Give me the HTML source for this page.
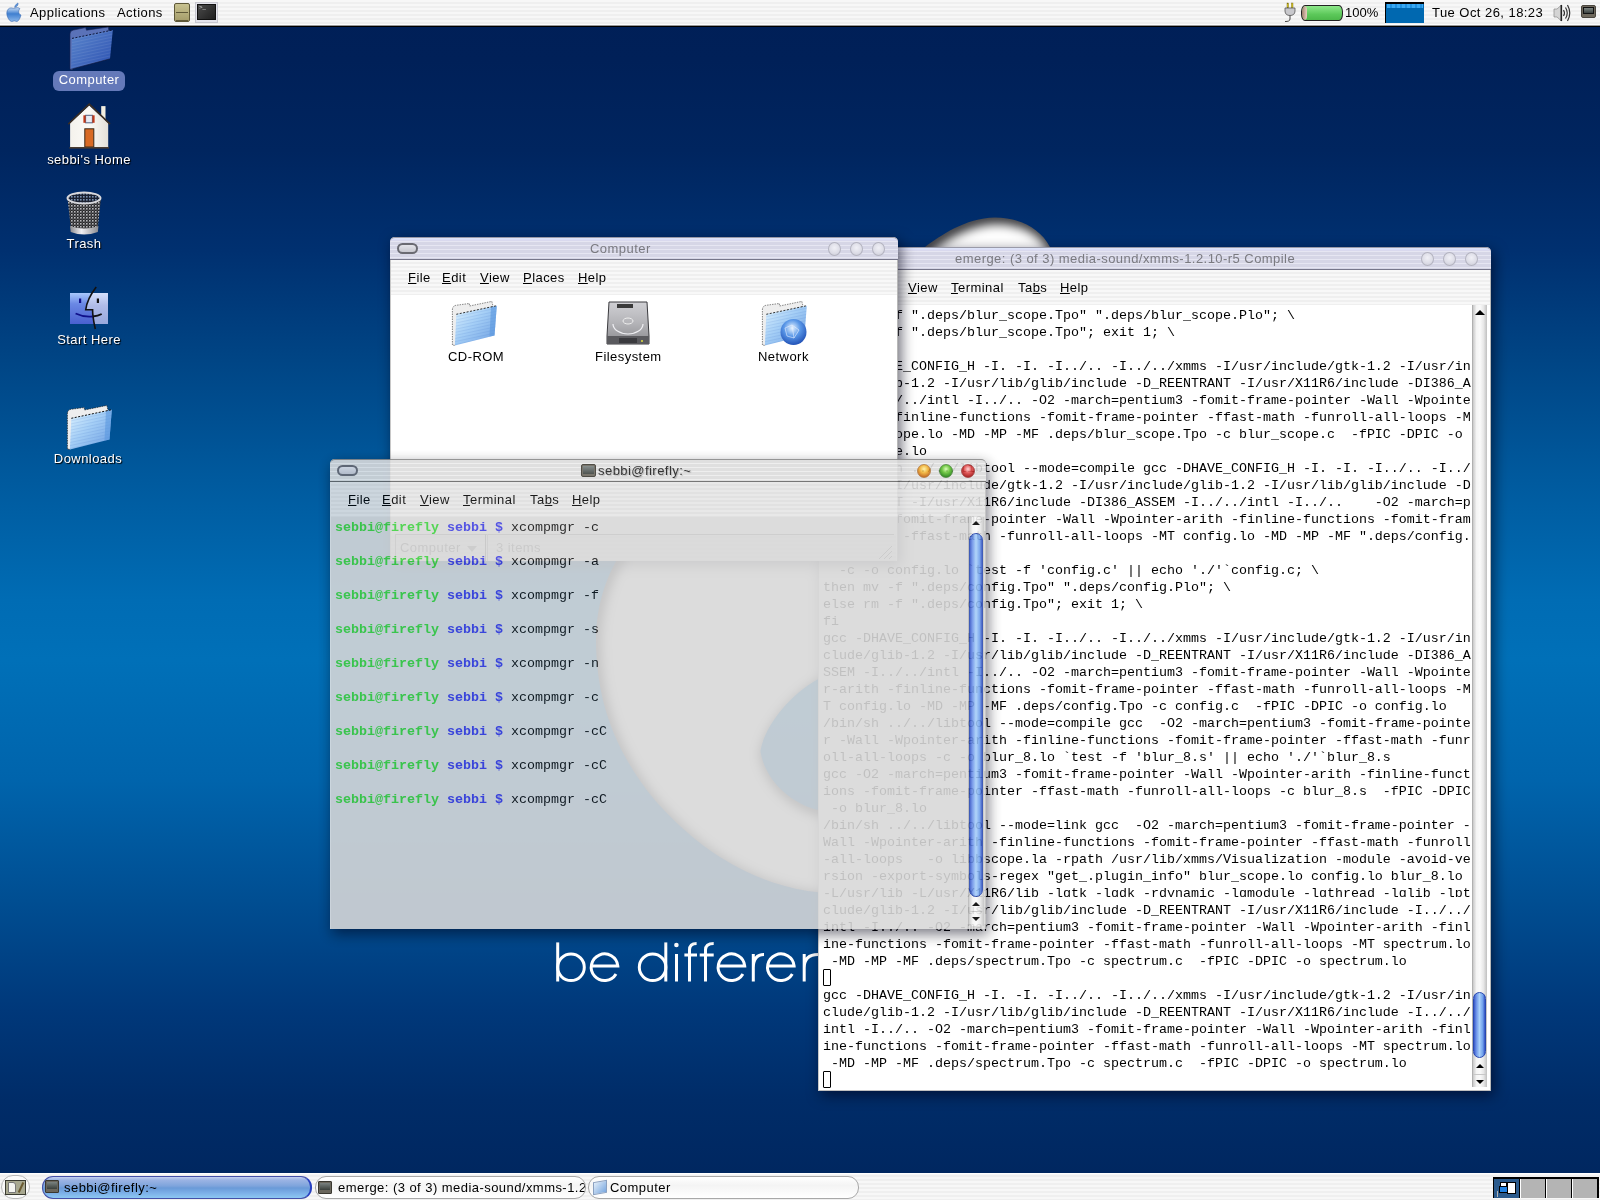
<!DOCTYPE html>
<html><head><meta charset="utf-8"><style>
*{margin:0;padding:0;box-sizing:border-box}
html,body{width:1600px;height:1200px;overflow:hidden}
body{position:relative;font-family:"Liberation Sans",sans-serif;font-size:14px;color:#000;
background:linear-gradient(to bottom,#001f57 0px,#002058 60px,#00255f 150px,#003070 250px,#004585 360px,#005a9e 480px,#006cb4 600px,#0070b8 660px,#0064ac 780px,#004e92 900px,#00387a 1010px,#002c68 1100px,#002760 1173px)}
.a{position:absolute}
.stripe{background:repeating-linear-gradient(to bottom,#f7f7f7 0 2px,#efefef 2px 4px)}
.tstripe{background:repeating-linear-gradient(to bottom,#dcdcea 0 2px,#cfcfdf 2px 4px)}
.mono{font-family:"Liberation Mono",monospace;font-size:13.333px;line-height:17px;white-space:pre}
.dlabel{color:#fff;font-size:13px;letter-spacing:.45px;line-height:16px;text-align:center;text-shadow:1px 1px 1px #000;white-space:nowrap}
.menu span{position:absolute;top:0}
.u{text-decoration:underline}
.ui{font-size:13px;letter-spacing:.45px;line-height:16px;white-space:nowrap;color:#000}

.win{position:absolute;background:#fff}
.tbar{position:absolute;left:0;top:0;right:0;height:23px;border-radius:5px 5px 0 0;border-top:1px solid #9a9aa8;
background:linear-gradient(#dce6fa 0,#dcdcf6 2px,transparent 3px),repeating-linear-gradient(to bottom,#d6d6e6 0 3px,#e6e6f2 3px 4px);border-bottom:1px solid #77778a}
.tbar .t{position:absolute;top:3px;font-size:13px;letter-spacing:.45px;color:#7a7a80;white-space:nowrap;line-height:16px}
.gbtn{position:absolute;top:4px;width:13px;height:14px;border-radius:50%;border:1px solid #b4b4c0;background:radial-gradient(circle at 50% 40%,#f0f0f6 0,#dcdce6 60%,#c8c8d4 100%)}
.oval{position:absolute;width:21px;height:11px;border-radius:6px;border:2px solid #6a6a72;background:linear-gradient(#e4e4ea,#c8c8d0)}
.mbar{position:absolute;left:1px;right:1px;background:repeating-linear-gradient(to bottom,#f8f8f8 0 2px,#efefef 2px 4px)}
.mbar .m{position:absolute;top:10px;font-size:13px;letter-spacing:.45px;line-height:16px;white-space:nowrap}
.m u{text-decoration:underline;text-decoration-thickness:1px;text-underline-offset:1px}
.cur{position:absolute;left:0;width:8px;height:17px;border:1px solid #000;border-radius:1px}
.strk{position:absolute;background:linear-gradient(90deg,#c8c8c8 0,#f4f4f4 25%,#fafafa 50%,#e8e8e8 75%,#c0c0c0 100%)}
.thumb{position:absolute;border-radius:7px;border:1px solid #2848b0;background:linear-gradient(90deg,#3858c8 0,#6a90e8 20%,#a8d0fa 50%,#70a0ec 80%,#3050c0 100%)}
</style></head><body><div id="root" style="position:absolute;left:0;top:0;width:1600px;height:1200px;will-change:transform">

<!-- wallpaper logo -->
<svg class="a" style="left:0;top:0" width="1600" height="1200" id="logo">
<defs>
<mask id="lm" maskUnits="userSpaceOnUse" x="0" y="0" width="1600" height="1200">
<path d="M995 217.5 C1020 218 1040 228 1050 247 C1100 330 1180 520 1160 700 C1140 850 950 910 807.5 891 C740 880 690 840 654.7 800 C615 752 596 700 596 640 C596 600 610 570 620 555 C680 440 850 290 925 247 C940 236 965 218 995 217.5 Z M760.4 751 C765 725 790 695 817 679.7 C900 640 1000 700 1000 745 C1000 800 900 830 817 809.7 C790 803 765 780 760.4 751 Z" fill="#fff" fill-rule="evenodd"/>
</mask>
<filter id="lb" x="-20%" y="-20%" width="140%" height="140%"><feGaussianBlur stdDeviation="4.5"/></filter>
</defs>
<g mask="url(#lm)">
<rect x="0" y="0" width="1600" height="1200" fill="#4a4a4e"/>
<g filter="url(#lb)" transform="translate(2 3)">
<path d="M995 217.5 C1020 218 1040 228 1050 247 C1100 330 1180 520 1160 700 C1140 850 950 910 807.5 891 C740 880 690 840 654.7 800 C615 752 596 700 596 640 C596 600 610 570 620 555 C680 440 850 290 925 247 C940 236 965 218 995 217.5 Z M760.4 751 C765 725 790 695 817 679.7 C900 640 1000 700 1000 745 C1000 800 900 830 817 809.7 C790 803 765 780 760.4 751 Z" fill="#fff" fill-rule="evenodd" stroke="#4a4a4e" stroke-width="12"/>
</g>
</g>
<g fill="none" stroke="#fff" stroke-width="3">
<path d="M557.7 942.4 V981.5"/>
<circle cx="571" cy="967.3" r="13.3"/>
<path d="M591.2 966 H617.8 A13.3 13.3 0 1 0 616 974"/>
<circle cx="652.6" cy="967.3" r="13.3"/>
<path d="M665.8 942.4 V981.5"/>
<path d="M676.5 954 V981.5"/>
<path d="M689.5 981.5 V950 Q689.5 943.5 696.6 943.5 M684.4 955 H697"/>
<path d="M705.5 981.5 V950 Q705.5 943.5 713.7 943.5 M699.7 955 H713.7"/>
<path d="M718.1 966 H744.7 A13.3 13.3 0 1 0 742.9 974"/>
<path d="M753.3 954 V981.5 M753.3 968 Q753.3 954.5 764 954.5"/>
<path d="M767.5 966 H794.1 A13.3 13.3 0 1 0 792.3 974"/>
<path d="M804.2 954 V981.5 M804.2 968 Q804.2 954.5 818 954.5 Q832 954.5 832 968 V981.5"/>
</g>
<circle cx="676.4" cy="945" r="2.3" fill="#fff"/>
</svg>

<!-- top panel -->
<div class="a stripe" style="left:0;top:0;width:1600px;height:24px"></div>
<div class="a" style="left:0;top:24px;width:1600px;height:1px;background:#fff"></div>
<div class="a" style="left:0;top:25px;width:1600px;height:1px;background:#999"></div>
<div class="a" style="left:0;top:26px;width:1600px;height:1px;background:#000"></div>
<svg class="a" style="left:5px;top:2px" width="19" height="21" viewBox="0 0 19 21">
<defs><linearGradient id="apg" x1="0" y1="0" x2="0" y2="1"><stop offset="0" stop-color="#c8dcf4"/><stop offset=".45" stop-color="#3f7fd0"/><stop offset="1" stop-color="#8ab6ea"/></linearGradient></defs>
<path d="M12.5 1.2 C13.6 0.6 13.2 2.8 12.2 4 C11.4 5 10.2 5.5 9.6 5.4 C9.6 4.2 10.8 2.3 12.5 1.2 Z" fill="#5a92d8" stroke="#3a6ab0" stroke-width=".5"/>
<path d="M9.6 6.4 C11.2 5.4 13.4 5.2 15 6.8 C13.2 8.2 13 11.6 16 13.2 C15.2 16 13.4 19.6 11.6 19.5 C10.6 19.4 10.4 18.9 9.3 18.9 C8.2 18.9 7.8 19.5 6.8 19.5 C4.6 19.5 1.8 15 1.8 11.2 C1.8 7.6 4 5.9 6 5.9 C7.6 5.9 8.4 6.7 9.6 6.4 Z" fill="url(#apg)" stroke="#3a6ab0" stroke-width=".6"/>
</svg>
<div class="a ui" style="left:30px;top:5px">Applications</div>
<div class="a ui" style="left:117px;top:5px">Actions</div>
<div class="a" style="left:174px;top:3px;width:16px;height:19px;background:linear-gradient(#c8c290,#a49c6a);border:1px solid #5e5838;border-radius:2px"></div>
<div class="a" style="left:176px;top:12px;width:12px;height:1px;background:#5e5838"></div>
<div class="a" style="left:176px;top:20px;width:12px;height:1px;background:#5e5838"></div>
<div class="a" style="left:195px;top:2px;width:23px;height:21px;background:#e4e4ec;border:1px solid #c8c8d0"></div>
<div class="a" style="left:197px;top:4px;width:19px;height:16px;background:linear-gradient(135deg,#4a4a4a,#1e1e1e);border:1px solid #111"></div>
<div class="a" style="left:199px;top:5px;width:6px;height:5px;color:#ddd;font-size:6px;line-height:5px">&gt;_</div>

<svg class="a" style="left:1283px;top:2px" width="14" height="21" viewBox="0 0 14 21">
<rect x="4" y="1" width="1.6" height="5" fill="#d8c820" stroke="#706010" stroke-width=".4"/><rect x="8.4" y="1" width="1.6" height="5" fill="#d8c820" stroke="#706010" stroke-width=".4"/>
<path d="M2 6 H12 V9 C12 12 10 13.5 7 13.5 C4 13.5 2 12 2 9 Z" fill="#c8c8cc" stroke="#555" stroke-width=".8"/>
<path d="M7 13.5 V17 C7 19 5 19.5 2 19.5" fill="none" stroke="#444" stroke-width="1"/>
</svg>
<div class="a" style="left:1301px;top:5px;width:42px;height:16px;border:1px solid #222;border-radius:4px/7px;background:linear-gradient(#8ee88a,#5cc85a 60%,#4cb84a);overflow:hidden"><div style="position:absolute;left:0;top:0;width:5px;height:14px;background:linear-gradient(90deg,#a08070,#e8d0c0);border-radius:4px/7px"></div></div>
<div class="a ui" style="left:1345px;top:5px;letter-spacing:0">100%</div>
<div class="a" style="left:1385px;top:2px;width:39px;height:21px;background:#0068b0;border-top:2px solid #000;border-left:1px solid #000"></div>
<div class="a" style="left:1387px;top:4px;width:36px;height:4px;background:repeating-linear-gradient(90deg,#3aa8f0 0 3px,#2090e0 3px 5px)"></div>
<div class="a ui" style="left:1432px;top:5px">Tue Oct 26, 18:23</div>
<svg class="a" style="left:1553px;top:4px" width="20" height="18" viewBox="0 0 20 18">
<path d="M1 5 H4 L8.5 1 V17 L4 13 H1 Z" fill="#d4d4d4" stroke="#888" stroke-width=".7"/>
<rect x="7.5" y="1" width="1.6" height="16" fill="#222"/>
<path d="M10.5 6 Q12.5 9 10.5 12" fill="none" stroke="#333" stroke-width="1.2"/>
<path d="M12.5 3.5 Q16 9 12.5 14.5" fill="none" stroke="#333" stroke-width="1.2"/>
<path d="M14.5 1 Q19 9 14.5 17" fill="none" stroke="#333" stroke-width="1.2"/>
</svg>
<div class="a" style="left:1581px;top:5px;width:15px;height:13px;background:#6e685c;border-radius:2px;border:1px solid #4a463e"></div>
<div class="a" style="left:1583px;top:7px;width:11px;height:7px;background:linear-gradient(#7c8480,#3a403e);border:1px solid #111"></div>

<!-- desktop icons -->
<svg class="a" style="left:66px;top:26px" width="50" height="46" viewBox="0 0 50 46">
<defs><linearGradient id="fdk" x1="0" y1="0" x2="1" y2="1"><stop offset="0" stop-color="#5a86cc"/><stop offset=".6" stop-color="#3f66bc"/><stop offset="1" stop-color="#2a50b0"/></linearGradient>
<pattern id="fst" width="4" height="3" patternUnits="userSpaceOnUse" patternTransform="rotate(-12)"><rect width="4" height="3" fill="none"/><rect y="2" width="4" height="1" fill="#ffffff" fill-opacity=".08"/></pattern></defs>
<path d="M4 43 L4 8 Q4 4.5 7.5 4 L19.6 1.6 L20.5 4.2 L42.4 1 L43 6 L6 44 Z" fill="#5a72b8" stroke="#1a2450" stroke-width=".6"/>
<path d="M6 12.4 L46.8 4 L44 32.8 L5.2 43.2 Z" fill="url(#fdk)"/>
<path d="M6 12.4 L46.8 4 L44 32.8 L5.2 43.2 Z" fill="url(#fst)"/>
<path d="M6 12.4 L46.8 4" stroke="#10183a" stroke-width="1" stroke-dasharray="2 1.5"/>
<path d="M5.2 43.2 L44 32.8" stroke="#10183a" stroke-width=".6"/>
</svg>
<div class="a" style="left:53px;top:71px;width:72px;height:20px;border-radius:6px;background:#6479b9"></div>
<div class="a dlabel" style="left:39px;top:72px;width:100px;text-shadow:none">Computer</div>

<svg class="a" style="left:66px;top:102px" width="46" height="48" viewBox="0 0 46 48">
<defs><linearGradient id="hw" x1="0" y1="0" x2="1" y2="0"><stop offset="0" stop-color="#f4f2ec"/><stop offset=".5" stop-color="#fbfaf6"/><stop offset="1" stop-color="#e4e0d8"/></linearGradient></defs>
<rect x="35.2" y="4.1" width="4.3" height="13" fill="#f2eee0"/>
<path d="M4.1 21 L23.25 3.5 L42.2 21 L42.2 45.5 L4.1 45.5 Z" fill="url(#hw)"/>
<path d="M2.3 22.1 L23.25 2.2 L44 22.1" fill="none" stroke="#3a2e24" stroke-width="1.6"/>
<rect x="19.6" y="13.3" width="6.8" height="7.5" fill="#e8ecf4" stroke="#506080" stroke-width="1"/>
<rect x="17.4" y="13.3" width="2.2" height="7.5" fill="#c03818"/><rect x="26.4" y="13.3" width="2.2" height="7.5" fill="#c03818"/>
<rect x="18.8" y="26.8" width="9" height="18.2" fill="#d86a24" stroke="#3a2a1a" stroke-width="1"/>
<rect x="3.5" y="45" width="39.5" height="1.6" fill="#4a3c30"/>
</svg>
<div class="a dlabel" style="left:29px;top:152px;width:120px">sebbi's Home</div>

<svg class="a" style="left:65px;top:190px" width="38" height="47" viewBox="0 0 38 47">
<defs>
<pattern id="mesh" width="3" height="3" patternUnits="userSpaceOnUse"><rect width="3" height="3" fill="#262628"/><rect width="1.6" height="1.6" fill="#b8b8bc"/><rect x="1.5" y="1.5" width="1.2" height="1.2" fill="#6a6a70"/></pattern>
<pattern id="mesh2" width="3" height="3" patternUnits="userSpaceOnUse"><rect width="3" height="3" fill="#1a2030"/><rect width="1.6" height="1.6" fill="#7a90b0"/></pattern>
<linearGradient id="silv" x1="0" y1="0" x2="1" y2="0"><stop offset="0" stop-color="#8a8a8e"/><stop offset=".4" stop-color="#f0f0f4"/><stop offset="1" stop-color="#8a8a8e"/></linearGradient>
</defs>
<path d="M2.5 8 L6 40 Q19 46 32.5 40 L36 8 Z" fill="url(#mesh)"/>
<path d="M5 36 Q19 41 33.5 36 L32.8 42 Q19 47 5.7 42 Z" fill="url(#silv)"/>
<ellipse cx="19" cy="8" rx="16.5" ry="5.5" fill="url(#mesh2)" stroke="#d8d8dc" stroke-width="2"/>
</svg>
<div class="a dlabel" style="left:34px;top:236px;width:100px">Trash</div>

<svg class="a" style="left:68px;top:285px" width="42" height="47" viewBox="0 0 42 47">
<defs>
<linearGradient id="fl" x1="0" y1="0" x2="0" y2="1"><stop offset="0" stop-color="#a8c8fc"/><stop offset=".35" stop-color="#6a88e4"/><stop offset="1" stop-color="#4a60d0"/></linearGradient>
<linearGradient id="fr" x1="0" y1="0" x2="0" y2="1"><stop offset="0" stop-color="#d4e0fc"/><stop offset=".4" stop-color="#b0bce8"/><stop offset="1" stop-color="#98a8dc"/></linearGradient>
</defs>
<rect x="2" y="8" width="38" height="31" fill="url(#fr)"/>
<path d="M2 8 L23.5 8 C20 14 18 20 17.7 24.8 L24.6 24.8 C24.5 30 25.5 35 26.2 39 L2 39 Z" fill="url(#fl)"/>
<path d="M28.2 1.9 C22 10 18.5 18 17.7 24.8 L24.6 24.8 C24.5 32 26 38 27.3 44" fill="none" stroke="#111" stroke-width="1.6"/>
<rect x="11" y="13.5" width="2.2" height="4.5" fill="#10108a"/><rect x="28.8" y="13.5" width="2.2" height="4.5" fill="#111"/>
<path d="M7.6 28.5 Q16 32.5 24.6 31.5" fill="none" stroke="#10108a" stroke-width="1.8"/>
<path d="M24.6 31.5 Q30 31 33.7 29" fill="none" stroke="#111" stroke-width="1.8"/>
</svg>
<div class="a dlabel" style="left:39px;top:332px;width:100px">Start Here</div>

<svg class="a" style="left:66px;top:404px" width="48" height="46" viewBox="0 0 48 46">
<defs><linearGradient id="flt" x1="0" y1="0" x2="1" y2="1"><stop offset="0" stop-color="#e0f4ff"/><stop offset=".45" stop-color="#a4cef6"/><stop offset="1" stop-color="#6a9ce0"/></linearGradient>
<pattern id="fst2" width="4" height="3" patternUnits="userSpaceOnUse" patternTransform="rotate(-12)"><rect width="4" height="3" fill="none"/><rect y="2" width="4" height="1" fill="#3060c0" fill-opacity=".12"/></pattern></defs>
<path d="M1.4 45 L1.4 10 Q1.4 6 5 5.3 L18.3 3.5 L18.5 6 L40.8 1.4 L42 6 L4 45.5 Z" fill="#eeeeee" stroke="#222" stroke-width=".7" stroke-dasharray="1.5 1"/>
<path d="M5.3 14.3 L45.8 5.7 L43.5 35.4 L3.9 45.4 Z" fill="url(#flt)"/>
<path d="M5.3 14.3 L45.8 5.7 L43.5 35.4 L3.9 45.4 Z" fill="url(#fst2)"/>
<path d="M40 7 L45.8 5.7 L43.5 35.4 L38.5 36.6 Z" fill="#5a98e0" fill-opacity=".6"/>
<path d="M5.3 14.3 L45.8 5.7" stroke="#111" stroke-width="1" stroke-dasharray="2 1.5"/>
</svg>
<div class="a dlabel" style="left:38px;top:451px;width:100px">Downloads</div>

<!-- bottom panel -->
<div class="a stripe" style="left:0;top:1173px;width:1600px;height:27px"></div>
<div class="a" style="left:0;top:1173px;width:1600px;height:1px;background:#fff"></div>
<div class="a" style="left:1px;top:1175px;width:29px;height:24px;border-radius:12px;border:1px solid #b8b8b8;background:#fafafa"></div>
<div class="a" style="left:5px;top:1180px;width:21px;height:15px;background:#a8a890;border:1px solid #3a3a30"></div>
<div class="a" style="left:8px;top:1182px;width:8px;height:11px;background:#f4f4f0;border:1px solid #777;border-radius:0 3px 0 0"></div>
<div class="a" style="left:20px;top:1182px;width:2px;height:11px;background:#6a5a30;transform:rotate(25deg)"></div>
<div class="a" style="left:42px;top:1176px;width:270px;height:23px;border-radius:11px;border:1px solid #4450a8;border-right:2px solid #2840c0;background:linear-gradient(#c4d0f0 0,#9cb4e4 3px,#7ea4dc 9px,#6a9ad8 11px,#7cb0e8 16px,#90ccf4 22px)"></div>
<div class="a" style="left:45px;top:1180px;width:14px;height:13px;background:#6a665c;border:1px solid #3a3830;border-radius:1px"></div>
<div class="a" style="left:47px;top:1182px;width:10px;height:7px;background:linear-gradient(#7a8280,#3a403c)"></div>
<div class="a ui" style="left:64px;top:1180px">sebbi@firefly:~</div>
<div class="a" style="left:315px;top:1176px;width:271px;height:23px;border-radius:11px;border:1px solid #a8a8a8;background:linear-gradient(#fff,#f4f4f4 40%,#fff);overflow:hidden">
<div style="position:absolute;left:2px;top:4px;width:14px;height:13px;background:#6a665c;border:1px solid #3a3830;border-radius:1px"></div>
<div style="position:absolute;left:4px;top:6px;width:10px;height:7px;background:linear-gradient(#7a8280,#3a403c)"></div>
<div class="ui" style="position:absolute;left:22px;top:3px">emerge: (3 of 3) media-sound/xmms-1.2.10-r5 Compile</div></div>
<div class="a" style="left:588px;top:1176px;width:271px;height:23px;border-radius:11px;border:1px solid #a8a8a8;background:linear-gradient(#fff,#f4f4f4 40%,#fff);overflow:hidden">
<div style="position:absolute;left:4px;top:4px;width:14px;height:13px;background:linear-gradient(135deg,#e0ecf8,#7aa8e0);border:1px solid #8aa0c0;transform:skewY(-10deg)"></div>
<div class="ui" style="position:absolute;left:21px;top:3px">Computer</div></div>
<div class="a" style="left:1493px;top:1177px;width:106px;height:21px;background:#000"></div>
<div class="a" style="left:1494px;top:1179px;width:25px;height:19px;background:#2a5a8c"></div>
<div class="a" style="left:1520px;top:1179px;width:25px;height:19px;background:#b4b4b4"></div>
<div class="a" style="left:1546px;top:1179px;width:25px;height:19px;background:#b4b4b4"></div>
<div class="a" style="left:1572px;top:1179px;width:25px;height:19px;background:#b4b4b4"></div>
<div class="a" style="left:1520px;top:1179px;width:1px;height:19px;background:#fff"></div>
<div class="a" style="left:1546px;top:1179px;width:1px;height:19px;background:#fff"></div>
<div class="a" style="left:1572px;top:1179px;width:1px;height:19px;background:#fff"></div>
<div class="a" style="left:1497px;top:1191px;width:1px;height:6px;background:#b4b4b4"></div>
<div class="a" style="left:1507px;top:1182px;width:9px;height:12px;background:#fff;border:1px solid #000"></div>
<div class="a" style="left:1500px;top:1182px;width:7px;height:4px;background:#fff;border:1px solid #000;border-bottom:0"></div>
<div class="a" style="left:1499px;top:1186px;width:9px;height:7px;background:#2080e0;border:1px solid #000"></div>

<!-- emerge window -->
<div class="win" id="emerge" style="left:818px;top:247px;width:673px;height:844px;box-shadow:3px 4px 14px rgba(0,0,20,.6);border-left:1px solid #c8c8c8;border-right:1px solid #b8b8b8;border-bottom:1px solid #c0c0c0;border-radius:5px 5px 0 0">
<div class="tbar" style="left:-1px;right:-1px">
<div class="t" style="left:137px">emerge: (3 of 3) media-sound/xmms-1.2.10-r5 Compile</div>
<div class="gbtn" style="left:603px"></div><div class="gbtn" style="left:625px"></div><div class="gbtn" style="left:647px"></div>
</div>
<div class="mbar" style="top:23px;height:35px;left:0;right:0">
<div class="m" style="left:17px"><u>F</u>ile</div><div class="m" style="left:51px"><u>E</u>dit</div><div class="m" style="left:89px"><u>V</u>iew</div><div class="m" style="left:132px"><u>T</u>erminal</div><div class="m" style="left:199px">Ta<u>b</u>s</div><div class="m" style="left:241px"><u>H</u>elp</div>
</div>
<div class="a" style="left:4px;top:60px;width:650px;height:782px;overflow:hidden">
<div class="mono a" style="left:0;top:0px">then mv -f &quot;.deps/blur_scope.Tpo&quot; &quot;.deps/blur_scope.Plo&quot;; \</div>
<div class="mono a" style="left:0;top:17px">else rm -f &quot;.deps/blur_scope.Tpo&quot;; exit 1; \</div>
<div class="mono a" style="left:0;top:34px">fi</div>
<div class="mono a" style="left:0;top:51px">gcc -DHAVE_CONFIG_H -I. -I. -I../.. -I../../xmms -I/usr/include/gtk-1.2 -I/usr/in</div>
<div class="mono a" style="left:0;top:68px">clude/glib-1.2 -I/usr/lib/glib/include -D_REENTRANT -I/usr/X11R6/include -DI386_A</div>
<div class="mono a" style="left:0;top:85px">SSEM -I../../intl -I../.. -O2 -march=pentium3 -fomit-frame-pointer -Wall -Wpointe</div>
<div class="mono a" style="left:0;top:102px">r-arith -finline-functions -fomit-frame-pointer -ffast-math -funroll-all-loops -M</div>
<div class="mono a" style="left:0;top:119px">T blur_scope.lo -MD -MP -MF .deps/blur_scope.Tpo -c blur_scope.c  -fPIC -DPIC -o</div>
<div class="mono a" style="left:0;top:136px">blur_scope.lo</div>
<div class="mono a" style="left:0;top:153px">if /bin/sh ../../libtool --mode=compile gcc -DHAVE_CONFIG_H -I. -I. -I../.. -I../</div>
<div class="mono a" style="left:0;top:170px">../xmms -I/usr/include/gtk-1.2 -I/usr/include/glib-1.2 -I/usr/lib/glib/include -D</div>
<div class="mono a" style="left:0;top:187px">_REENTRANT -I/usr/X11R6/include -DI386_ASSEM -I../../intl -I../..    -O2 -march=p</div>
<div class="mono a" style="left:0;top:204px">entium3 -fomit-frame-pointer -Wall -Wpointer-arith -finline-functions -fomit-fram</div>
<div class="mono a" style="left:0;top:221px">e-pointer -ffast-math -funroll-all-loops -MT config.lo -MD -MP -MF &quot;.deps/config.</div>
<div class="mono a" style="left:0;top:238px">Tpo&quot;</div>
<div class="mono a" style="left:0;top:255px">  -c -o config.lo `test -f &#x27;config.c&#x27; || echo &#x27;./&#x27;`config.c; \</div>
<div class="mono a" style="left:0;top:272px">then mv -f &quot;.deps/config.Tpo&quot; &quot;.deps/config.Plo&quot;; \</div>
<div class="mono a" style="left:0;top:289px">else rm -f &quot;.deps/config.Tpo&quot;; exit 1; \</div>
<div class="mono a" style="left:0;top:306px">fi</div>
<div class="mono a" style="left:0;top:323px">gcc -DHAVE_CONFIG_H -I. -I. -I../.. -I../../xmms -I/usr/include/gtk-1.2 -I/usr/in</div>
<div class="mono a" style="left:0;top:340px">clude/glib-1.2 -I/usr/lib/glib/include -D_REENTRANT -I/usr/X11R6/include -DI386_A</div>
<div class="mono a" style="left:0;top:357px">SSEM -I../../intl -I../.. -O2 -march=pentium3 -fomit-frame-pointer -Wall -Wpointe</div>
<div class="mono a" style="left:0;top:374px">r-arith -finline-functions -fomit-frame-pointer -ffast-math -funroll-all-loops -M</div>
<div class="mono a" style="left:0;top:391px">T config.lo -MD -MP -MF .deps/config.Tpo -c config.c  -fPIC -DPIC -o config.lo</div>
<div class="mono a" style="left:0;top:408px">/bin/sh ../../libtool --mode=compile gcc  -O2 -march=pentium3 -fomit-frame-pointe</div>
<div class="mono a" style="left:0;top:425px">r -Wall -Wpointer-arith -finline-functions -fomit-frame-pointer -ffast-math -funr</div>
<div class="mono a" style="left:0;top:442px">oll-all-loops -c -o blur_8.lo `test -f &#x27;blur_8.s&#x27; || echo &#x27;./&#x27;`blur_8.s</div>
<div class="mono a" style="left:0;top:459px">gcc -O2 -march=pentium3 -fomit-frame-pointer -Wall -Wpointer-arith -finline-funct</div>
<div class="mono a" style="left:0;top:476px">ions -fomit-frame-pointer -ffast-math -funroll-all-loops -c blur_8.s  -fPIC -DPIC</div>
<div class="mono a" style="left:0;top:493px"> -o blur_8.lo</div>
<div class="mono a" style="left:0;top:510px">/bin/sh ../../libtool --mode=link gcc  -O2 -march=pentium3 -fomit-frame-pointer -</div>
<div class="mono a" style="left:0;top:527px">Wall -Wpointer-arith -finline-functions -fomit-frame-pointer -ffast-math -funroll</div>
<div class="mono a" style="left:0;top:544px">-all-loops   -o libbscope.la -rpath /usr/lib/xmms/Visualization -module -avoid-ve</div>
<div class="mono a" style="left:0;top:561px">rsion -export-symbols-regex &quot;get_.plugin_info&quot; blur_scope.lo config.lo blur_8.lo</div>
<div class="mono a" style="left:0;top:578px;height:12px;overflow:hidden">-L/usr/lib -L/usr/X11R6/lib -lgtk -lgdk -rdynamic -lgmodule -lgthread -lglib -lpt</div>
<div class="mono a" style="left:0;top:595px">clude/glib-1.2 -I/usr/lib/glib/include -D_REENTRANT -I/usr/X11R6/include -I../../</div>
<div class="mono a" style="left:0;top:612px">intl -I../.. -O2 -march=pentium3 -fomit-frame-pointer -Wall -Wpointer-arith -finl</div>
<div class="mono a" style="left:0;top:629px">ine-functions -fomit-frame-pointer -ffast-math -funroll-all-loops -MT spectrum.lo</div>
<div class="mono a" style="left:0;top:646px"> -MD -MP -MF .deps/spectrum.Tpo -c spectrum.c  -fPIC -DPIC -o spectrum.lo</div>
<div class="cur" style="top:662px"></div>
<div class="mono a" style="left:0;top:680px">gcc -DHAVE_CONFIG_H -I. -I. -I../.. -I../../xmms -I/usr/include/gtk-1.2 -I/usr/in</div>
<div class="mono a" style="left:0;top:697px">clude/glib-1.2 -I/usr/lib/glib/include -D_REENTRANT -I/usr/X11R6/include -I../../</div>
<div class="mono a" style="left:0;top:714px">intl -I../.. -O2 -march=pentium3 -fomit-frame-pointer -Wall -Wpointer-arith -finl</div>
<div class="mono a" style="left:0;top:731px">ine-functions -fomit-frame-pointer -ffast-math -funroll-all-loops -MT spectrum.lo</div>
<div class="mono a" style="left:0;top:748px"> -MD -MP -MF .deps/spectrum.Tpo -c spectrum.c  -fPIC -DPIC -o spectrum.lo</div>
<div class="cur" style="top:764px"></div>
</div>
<div class="strk" style="left:653px;top:58px;width:15px;height:782px;border-left:1px solid #b0b0b0"></div>
<div class="thumb" style="left:654px;top:745px;width:13px;height:66px"></div>
<div class="a" style="left:656px;top:63px;width:0;height:0;border-left:5px solid transparent;border-right:5px solid transparent;border-bottom:5px solid #000"></div>
<div class="a" style="left:657px;top:817px;width:0;height:0;border-left:4px solid transparent;border-right:4px solid transparent;border-bottom:4px solid #000"></div>
<div class="a" style="left:654px;top:827px;width:13px;height:1px;background:#c8c8c8"></div>
<div class="a" style="left:657px;top:833px;width:0;height:0;border-left:4px solid transparent;border-right:4px solid transparent;border-top:4px solid #000"></div>
</div>

<!-- computer window -->
<div class="win" id="computer" style="left:390px;top:237px;width:508px;height:324px;box-shadow:3px 4px 14px rgba(0,0,20,.6);border-left:1px solid #c8c8c8;border-right:1px solid #b8b8b8;border-radius:5px 5px 0 0">
<div class="tbar" style="left:-1px;right:-1px">
<div class="oval" style="left:7px;top:5px"></div>
<div class="t" style="left:200px">Computer</div>
<div class="gbtn" style="left:438px"></div><div class="gbtn" style="left:460px"></div><div class="gbtn" style="left:482px"></div>
</div>
<div class="mbar" style="top:23px;height:35px;left:0;right:0">
<div class="m" style="left:17px"><u>F</u>ile</div><div class="m" style="left:51px"><u>E</u>dit</div><div class="m" style="left:89px"><u>V</u>iew</div><div class="m" style="left:132px"><u>P</u>laces</div><div class="m" style="left:187px"><u>H</u>elp</div>
</div>
<svg class="a" style="left:60px;top:63px" width="48" height="48" viewBox="0 0 48 48">
<defs><linearGradient id="flt2" x1="0" y1="0" x2="1" y2="1"><stop offset="0" stop-color="#e0f4ff"/><stop offset=".45" stop-color="#a4cef6"/><stop offset="1" stop-color="#6a9ce0"/></linearGradient></defs>
<path d="M1.4 45 L1.4 10 Q1.4 6 5 5.3 L18.3 3.5 L18.5 6 L40.8 1.4 L42 6 L4 45.5 Z" fill="#eeeeee" stroke="#555" stroke-width=".7" stroke-dasharray="1.5 1"/>
<path d="M5.3 14.3 L45.8 5.7 L43.5 35.4 L3.9 45.4 Z" fill="url(#flt2)"/>
<path d="M5.3 14.3 L45.8 5.7 L43.5 35.4 L3.9 45.4 Z" fill="url(#fst2)"/>
<path d="M40 7 L45.8 5.7 L43.5 35.4 L38.5 36.6 Z" fill="#5a98e0" fill-opacity=".6"/>
<path d="M5.3 14.3 L45.8 5.7" stroke="#333" stroke-width="1" stroke-dasharray="2 1.5"/>
</svg>
<div class="a ui" style="left:57px;top:112px">CD-ROM</div>
<svg class="a" style="left:214px;top:63px" width="46" height="46" viewBox="0 0 46 46">
<defs><linearGradient id="hdd" x1="0" y1="0" x2="0" y2="1"><stop offset="0" stop-color="#d0d0d4"/><stop offset=".5" stop-color="#b4b4b8"/><stop offset="1" stop-color="#8a8a8e"/></linearGradient></defs>
<path d="M4 2 H42 L44 36 V44 H2 V36 Z" fill="url(#hdd)" stroke="#3a3a3e" stroke-width="1"/>
<rect x="12" y="4" width="16" height="4" fill="#3a3a3a"/>
<path d="M8 24 A15 10 0 0 0 38 24" fill="none" stroke="#f0f0f4" stroke-width="1.2"/>
<ellipse cx="23" cy="21" rx="5" ry="3" fill="none" stroke="#eee" stroke-width="1"/>
<rect x="2" y="36" width="42" height="8" fill="#5a5a5e"/><rect x="14" y="38" width="18" height="5" fill="#3a3a3e"/>
<circle cx="37" cy="41" r="1" fill="#e0e040"/>
</svg>
<div class="a ui" style="left:204px;top:112px">Filesystem</div>
<svg class="a" style="left:370px;top:63px" width="48" height="48" viewBox="0 0 48 48">
<path d="M1.4 45 L1.4 10 Q1.4 6 5 5.3 L18.3 3.5 L18.5 6 L40.8 1.4 L42 6 L4 45.5 Z" fill="#eeeeee" stroke="#555" stroke-width=".7" stroke-dasharray="1.5 1"/>
<path d="M5.3 14.3 L45.8 5.7 L43.5 35.4 L3.9 45.4 Z" fill="url(#flt2)"/>
<path d="M5.3 14.3 L45.8 5.7 L43.5 35.4 L3.9 45.4 Z" fill="url(#fst2)"/>
<path d="M5.3 14.3 L45.8 5.7" stroke="#333" stroke-width="1" stroke-dasharray="2 1.5"/>
<defs><radialGradient id="glb" cx=".45" cy=".35" r=".7"><stop offset="0" stop-color="#e8f4ff"/><stop offset=".45" stop-color="#5a98e8"/><stop offset="1" stop-color="#1a48b0"/></radialGradient></defs>
<circle cx="32.5" cy="32" r="13" fill="url(#glb)"/><path d="M24 28 L31 25 L38 30 L33 38 L26 36 Z M31 25 L33 38" fill="none" stroke="#e8f0ff" stroke-width=".6"/>
</svg>
<div class="a ui" style="left:367px;top:112px">Network</div>
<div class="a" style="left:0;top:297px;width:505px;height:27px;background:repeating-linear-gradient(to bottom,#f8f8f8 0 2px,#efefef 2px 4px)"></div>
<div class="a" style="left:4px;top:297px;width:499px;height:1px;background:#808080"></div>
<div class="a" style="left:4px;top:297px;width:1px;height:27px;background:#888"></div>
<div class="a" style="left:94px;top:297px;width:1px;height:27px;background:#555"></div>
<div class="a" style="left:96px;top:297px;width:1px;height:27px;background:#999"></div>
<div class="a ui" style="left:9px;top:303px;color:#505050">Computer</div>
<div class="a" style="left:76px;top:309px;width:0;height:0;border-left:5px solid transparent;border-right:5px solid transparent;border-top:6px solid #777"></div>
<div class="a ui" style="left:105px;top:303px;color:#5a5a5a">3 items</div>
<svg class="a" style="left:484px;top:305px" width="18" height="18"><path d="M17 4 L4 17 M17 9 L9 17 M17 14 L14 17" stroke="#707070" stroke-width="1"/></svg>
</div>

<!-- sebbi terminal -->
<div class="win" id="sebbi" style="left:330px;top:459px;width:656px;height:470px;background:#d8d8d8;opacity:.89;box-shadow:2px 5px 14px rgba(0,0,20,.6);border-left:1px solid #e4e4e4;border-right:1px solid #c0c0c0;border-radius:5px 5px 0 0">
<div class="tbar" style="left:-1px;right:-1px;border-top:1px solid #888;background:repeating-linear-gradient(to bottom,#dcdcdc 0 3px,#ececec 3px 4px);border-bottom:1px solid #666">
<div class="oval" style="left:7px;top:5px"></div>
<div class="a" style="left:251px;top:4px;width:15px;height:13px;background:#6a665c;border:1px solid #3a3830;border-radius:2px"></div>
<div class="a" style="left:253px;top:6px;width:11px;height:8px;background:linear-gradient(#7a8280,#3a403c)"></div>
<div class="t" style="left:268px;color:#1a1a1a;text-shadow:1px 1px 1px rgba(0,0,0,.25)">sebbi@firefly:~</div>
<svg class="a" style="left:586px;top:3px" width="66" height="16" viewBox="0 0 66 16">
<defs>
<radialGradient id="bo" cx=".5" cy=".35" r=".6"><stop offset="0" stop-color="#fff2a0"/><stop offset=".5" stop-color="#f0b030"/><stop offset="1" stop-color="#c06010"/></radialGradient>
<radialGradient id="bg" cx=".5" cy=".35" r=".6"><stop offset="0" stop-color="#d8ffb0"/><stop offset=".5" stop-color="#60c030"/><stop offset="1" stop-color="#208010"/></radialGradient>
<radialGradient id="br" cx=".5" cy=".35" r=".6"><stop offset="0" stop-color="#ffd0d0"/><stop offset=".5" stop-color="#e04848"/><stop offset="1" stop-color="#a01010"/></radialGradient>
</defs>
<circle cx="8" cy="8" r="6.5" fill="url(#bo)" stroke="#a06020" stroke-width=".7"/>
<circle cx="30" cy="8" r="6.5" fill="url(#bg)" stroke="#307020" stroke-width=".7"/>
<circle cx="52" cy="8" r="6.5" fill="url(#br)" stroke="#902020" stroke-width=".7"/>
</svg>
</div>
<div class="mbar" style="top:23px;height:35px;left:0;right:0;background:repeating-linear-gradient(to bottom,#e6e6e6 0 2px,#dedede 2px 4px)">
<div class="m" style="left:17px"><u>F</u>ile</div><div class="m" style="left:51px"><u>E</u>dit</div><div class="m" style="left:89px"><u>V</u>iew</div><div class="m" style="left:132px"><u>T</u>erminal</div><div class="m" style="left:199px">Ta<u>b</u>s</div><div class="m" style="left:241px"><u>H</u>elp</div>
</div>
<div class="a mono" style="left:4px;top:60px;font-weight:normal"><b style="color:#40d040">sebbi@firefly</b> <b style="color:#4040e0">sebbi $</b> <span style="color:#111">xcompmgr -c</span>

<b style="color:#40d040">sebbi@firefly</b> <b style="color:#4040e0">sebbi $</b> <span style="color:#111">xcompmgr -a</span>

<b style="color:#40d040">sebbi@firefly</b> <b style="color:#4040e0">sebbi $</b> <span style="color:#111">xcompmgr -f</span>

<b style="color:#40d040">sebbi@firefly</b> <b style="color:#4040e0">sebbi $</b> <span style="color:#111">xcompmgr -s</span>

<b style="color:#40d040">sebbi@firefly</b> <b style="color:#4040e0">sebbi $</b> <span style="color:#111">xcompmgr -n</span>

<b style="color:#40d040">sebbi@firefly</b> <b style="color:#4040e0">sebbi $</b> <span style="color:#111">xcompmgr -c</span>

<b style="color:#40d040">sebbi@firefly</b> <b style="color:#4040e0">sebbi $</b> <span style="color:#111">xcompmgr -cC</span>

<b style="color:#40d040">sebbi@firefly</b> <b style="color:#4040e0">sebbi $</b> <span style="color:#111">xcompmgr -cC</span>

<b style="color:#40d040">sebbi@firefly</b> <b style="color:#4040e0">sebbi $</b> <span style="color:#111">xcompmgr -cC</span></div>
<div class="strk" style="left:637px;top:58px;width:16px;height:409px;border-left:1px solid #b8b8b8"></div>
<div class="thumb" style="left:638px;top:74px;width:14px;height:364px"></div>
<div class="a" style="left:641px;top:62px;width:0;height:0;border-left:4px solid transparent;border-right:4px solid transparent;border-bottom:4px solid #000"></div>
<div class="a" style="left:641px;top:443px;width:0;height:0;border-left:4px solid transparent;border-right:4px solid transparent;border-bottom:4px solid #000"></div>
<div class="a" style="left:638px;top:452px;width:14px;height:1px;background:#c8c8c8"></div>
<div class="a" style="left:641px;top:458px;width:0;height:0;border-left:4px solid transparent;border-right:4px solid transparent;border-top:4px solid #000"></div>
</div>

</div></body></html>
